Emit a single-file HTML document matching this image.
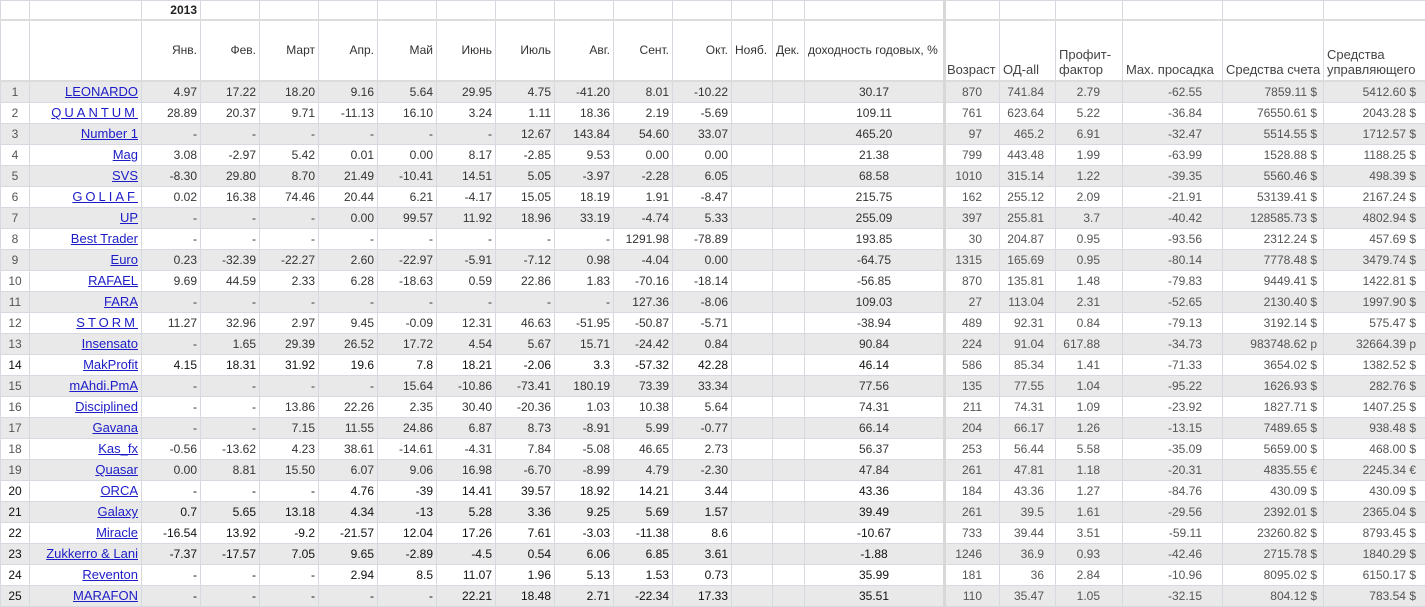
<!DOCTYPE html>
<html><head><meta charset="utf-8"><style>
body{margin:0;background:#fff;width:1425px;height:606px;overflow:hidden}
table{border-collapse:collapse;table-layout:fixed;width:1425px;font-family:"Liberation Sans","DejaVu Sans",sans-serif;font-size:12px;color:#333}
td{border:1px solid #d6d9e0;padding:0 3px;white-space:nowrap;overflow:hidden;text-align:right;height:20px;line-height:20px}
tr.g td{background:#e9e9e9}
tr.h1 td{height:18px;line-height:18px;border-bottom:2px solid #dcdcdc;font-weight:bold;color:#222}
tr.h2 td{height:56px;border-bottom:2px solid #dcdcdc;line-height:15px}
td.hr{font-size:13px;color:#444;vertical-align:bottom;text-align:left;padding-bottom:3px}
td.i{color:#555;text-align:center}
td.nm a{color:#1c1cc8;text-decoration:underline;font-size:13px}
td.y{text-align:center}
td.s{border-left:3px solid #d8d8d8}
td.r{color:#555}
td.a{padding-right:17px}
td.o{padding-right:11px}
td.p{padding-right:22px}
td.d{padding-right:20px}
td.e{padding-right:6px}
td.m{padding-right:9px}
tr.k td{color:#111}
tr.k td.r{color:#555}
.sp{letter-spacing:3px}
</style></head><body>
<table>
<colgroup><col style="width:29px"><col style="width:112px"><col style="width:59px"><col style="width:59px"><col style="width:59px"><col style="width:59px"><col style="width:59px"><col style="width:59px"><col style="width:59px"><col style="width:59px"><col style="width:59px"><col style="width:59px"><col style="width:41px"><col style="width:32px"><col style="width:140px"><col style="width:55px"><col style="width:56px"><col style="width:67px"><col style="width:100px"><col style="width:101px"><col style="width:102px"></colgroup>
<tr class="h1"><td></td><td></td><td>2013</td><td></td><td></td><td></td><td></td><td></td><td></td><td></td><td></td><td></td><td></td><td></td><td></td><td class="s"></td><td></td><td></td><td></td><td></td><td></td></tr>
<tr class="h2"><td></td><td></td><td>Янв.</td><td>Фев.</td><td>Март</td><td>Апр.</td><td>Май</td><td>Июнь</td><td>Июль</td><td>Авг.</td><td>Сент.</td><td>Окт.</td><td style="text-align:left">Нояб.</td><td style="text-align:left">Дек.</td><td style="text-align:left">доходность годовых, %</td>
<td class="s hr" style="padding-left:1px">Возраст</td><td class="hr">ОД-all</td><td class="hr">Профит-<br>фактор</td><td class="hr">Max. просадка</td><td class="hr" style="text-align:right">Средства счета</td><td class="hr">Средства<br>управляющего</td></tr>

<tr class="g"><td class="i">1</td><td class="nm"><a>LEONARDO</a></td><td>4.97</td><td>17.22</td><td>18.20</td><td>9.16</td><td>5.64</td><td>29.95</td><td>4.75</td><td>-41.20</td><td>8.01</td><td>-10.22</td><td></td><td></td><td class="y">30.17</td><td class="s r a">870</td><td class="r o">741.84</td><td class="r p">2.79</td><td class="r d">-62.55</td><td class="r e">7859.11 $</td><td class="r m">5412.60 $</td></tr>
<tr><td class="i">2</td><td class="nm"><a class="sp">QUANTUM</a></td><td>28.89</td><td>20.37</td><td>9.71</td><td>-11.13</td><td>16.10</td><td>3.24</td><td>1.11</td><td>18.36</td><td>2.19</td><td>-5.69</td><td></td><td></td><td class="y">109.11</td><td class="s r a">761</td><td class="r o">623.64</td><td class="r p">5.22</td><td class="r d">-36.84</td><td class="r e">76550.61 $</td><td class="r m">2043.28 $</td></tr>
<tr class="g"><td class="i">3</td><td class="nm"><a>Number 1</a></td><td>-</td><td>-</td><td>-</td><td>-</td><td>-</td><td>-</td><td>12.67</td><td>143.84</td><td>54.60</td><td>33.07</td><td></td><td></td><td class="y">465.20</td><td class="s r a">97</td><td class="r o">465.2</td><td class="r p">6.91</td><td class="r d">-32.47</td><td class="r e">5514.55 $</td><td class="r m">1712.57 $</td></tr>
<tr><td class="i">4</td><td class="nm"><a>Mag</a></td><td>3.08</td><td>-2.97</td><td>5.42</td><td>0.01</td><td>0.00</td><td>8.17</td><td>-2.85</td><td>9.53</td><td>0.00</td><td>0.00</td><td></td><td></td><td class="y">21.38</td><td class="s r a">799</td><td class="r o">443.48</td><td class="r p">1.99</td><td class="r d">-63.99</td><td class="r e">1528.88 $</td><td class="r m">1188.25 $</td></tr>
<tr class="g"><td class="i">5</td><td class="nm"><a>SVS</a></td><td>-8.30</td><td>29.80</td><td>8.70</td><td>21.49</td><td>-10.41</td><td>14.51</td><td>5.05</td><td>-3.97</td><td>-2.28</td><td>6.05</td><td></td><td></td><td class="y">68.58</td><td class="s r a">1010</td><td class="r o">315.14</td><td class="r p">1.22</td><td class="r d">-39.35</td><td class="r e">5560.46 $</td><td class="r m">498.39 $</td></tr>
<tr><td class="i">6</td><td class="nm"><a class="sp">GOLIAF</a></td><td>0.02</td><td>16.38</td><td>74.46</td><td>20.44</td><td>6.21</td><td>-4.17</td><td>15.05</td><td>18.19</td><td>1.91</td><td>-8.47</td><td></td><td></td><td class="y">215.75</td><td class="s r a">162</td><td class="r o">255.12</td><td class="r p">2.09</td><td class="r d">-21.91</td><td class="r e">53139.41 $</td><td class="r m">2167.24 $</td></tr>
<tr class="g"><td class="i">7</td><td class="nm"><a>UP</a></td><td>-</td><td>-</td><td>-</td><td>0.00</td><td>99.57</td><td>11.92</td><td>18.96</td><td>33.19</td><td>-4.74</td><td>5.33</td><td></td><td></td><td class="y">255.09</td><td class="s r a">397</td><td class="r o">255.81</td><td class="r p">3.7</td><td class="r d">-40.42</td><td class="r e">128585.73 $</td><td class="r m">4802.94 $</td></tr>
<tr><td class="i">8</td><td class="nm"><a>Best Trader</a></td><td>-</td><td>-</td><td>-</td><td>-</td><td>-</td><td>-</td><td>-</td><td>-</td><td>1291.98</td><td>-78.89</td><td></td><td></td><td class="y">193.85</td><td class="s r a">30</td><td class="r o">204.87</td><td class="r p">0.95</td><td class="r d">-93.56</td><td class="r e">2312.24 $</td><td class="r m">457.69 $</td></tr>
<tr class="g"><td class="i">9</td><td class="nm"><a>Euro</a></td><td>0.23</td><td>-32.39</td><td>-22.27</td><td>2.60</td><td>-22.97</td><td>-5.91</td><td>-7.12</td><td>0.98</td><td>-4.04</td><td>0.00</td><td></td><td></td><td class="y">-64.75</td><td class="s r a">1315</td><td class="r o">165.69</td><td class="r p">0.95</td><td class="r d">-80.14</td><td class="r e">7778.48 $</td><td class="r m">3479.74 $</td></tr>
<tr><td class="i">10</td><td class="nm"><a>RAFAEL</a></td><td>9.69</td><td>44.59</td><td>2.33</td><td>6.28</td><td>-18.63</td><td>0.59</td><td>22.86</td><td>1.83</td><td>-70.16</td><td>-18.14</td><td></td><td></td><td class="y">-56.85</td><td class="s r a">870</td><td class="r o">135.81</td><td class="r p">1.48</td><td class="r d">-79.83</td><td class="r e">9449.41 $</td><td class="r m">1422.81 $</td></tr>
<tr class="g"><td class="i">11</td><td class="nm"><a>FARA</a></td><td>-</td><td>-</td><td>-</td><td>-</td><td>-</td><td>-</td><td>-</td><td>-</td><td>127.36</td><td>-8.06</td><td></td><td></td><td class="y">109.03</td><td class="s r a">27</td><td class="r o">113.04</td><td class="r p">2.31</td><td class="r d">-52.65</td><td class="r e">2130.40 $</td><td class="r m">1997.90 $</td></tr>
<tr><td class="i">12</td><td class="nm"><a class="sp">STORM</a></td><td>11.27</td><td>32.96</td><td>2.97</td><td>9.45</td><td>-0.09</td><td>12.31</td><td>46.63</td><td>-51.95</td><td>-50.87</td><td>-5.71</td><td></td><td></td><td class="y">-38.94</td><td class="s r a">489</td><td class="r o">92.31</td><td class="r p">0.84</td><td class="r d">-79.13</td><td class="r e">3192.14 $</td><td class="r m">575.47 $</td></tr>
<tr class="g"><td class="i">13</td><td class="nm"><a>Insensato</a></td><td>-</td><td>1.65</td><td>29.39</td><td>26.52</td><td>17.72</td><td>4.54</td><td>5.67</td><td>15.71</td><td>-24.42</td><td>0.84</td><td></td><td></td><td class="y">90.84</td><td class="s r a">224</td><td class="r o">91.04</td><td class="r p">617.88</td><td class="r d">-34.73</td><td class="r e">983748.62 р</td><td class="r m">32664.39 р</td></tr>
<tr class="k"><td class="i">14</td><td class="nm"><a>MakProfit</a></td><td>4.15</td><td>18.31</td><td>31.92</td><td>19.6</td><td>7.8</td><td>18.21</td><td>-2.06</td><td>3.3</td><td>-57.32</td><td>42.28</td><td></td><td></td><td class="y">46.14</td><td class="s r a">586</td><td class="r o">85.34</td><td class="r p">1.41</td><td class="r d">-71.33</td><td class="r e">3654.02 $</td><td class="r m">1382.52 $</td></tr>
<tr class="g"><td class="i">15</td><td class="nm"><a>mAhdi.PmA</a></td><td>-</td><td>-</td><td>-</td><td>-</td><td>15.64</td><td>-10.86</td><td>-73.41</td><td>180.19</td><td>73.39</td><td>33.34</td><td></td><td></td><td class="y">77.56</td><td class="s r a">135</td><td class="r o">77.55</td><td class="r p">1.04</td><td class="r d">-95.22</td><td class="r e">1626.93 $</td><td class="r m">282.76 $</td></tr>
<tr><td class="i">16</td><td class="nm"><a>Disciplined</a></td><td>-</td><td>-</td><td>13.86</td><td>22.26</td><td>2.35</td><td>30.40</td><td>-20.36</td><td>1.03</td><td>10.38</td><td>5.64</td><td></td><td></td><td class="y">74.31</td><td class="s r a">211</td><td class="r o">74.31</td><td class="r p">1.09</td><td class="r d">-23.92</td><td class="r e">1827.71 $</td><td class="r m">1407.25 $</td></tr>
<tr class="g"><td class="i">17</td><td class="nm"><a>Gavana</a></td><td>-</td><td>-</td><td>7.15</td><td>11.55</td><td>24.86</td><td>6.87</td><td>8.73</td><td>-8.91</td><td>5.99</td><td>-0.77</td><td></td><td></td><td class="y">66.14</td><td class="s r a">204</td><td class="r o">66.17</td><td class="r p">1.26</td><td class="r d">-13.15</td><td class="r e">7489.65 $</td><td class="r m">938.48 $</td></tr>
<tr><td class="i">18</td><td class="nm"><a>Kas_fx</a></td><td>-0.56</td><td>-13.62</td><td>4.23</td><td>38.61</td><td>-14.61</td><td>-4.31</td><td>7.84</td><td>-5.08</td><td>46.65</td><td>2.73</td><td></td><td></td><td class="y">56.37</td><td class="s r a">253</td><td class="r o">56.44</td><td class="r p">5.58</td><td class="r d">-35.09</td><td class="r e">5659.00 $</td><td class="r m">468.00 $</td></tr>
<tr class="g"><td class="i">19</td><td class="nm"><a>Quasar</a></td><td>0.00</td><td>8.81</td><td>15.50</td><td>6.07</td><td>9.06</td><td>16.98</td><td>-6.70</td><td>-8.99</td><td>4.79</td><td>-2.30</td><td></td><td></td><td class="y">47.84</td><td class="s r a">261</td><td class="r o">47.81</td><td class="r p">1.18</td><td class="r d">-20.31</td><td class="r e">4835.55 €</td><td class="r m">2245.34 €</td></tr>
<tr class="k"><td class="i">20</td><td class="nm"><a>ORCA</a></td><td>-</td><td>-</td><td>-</td><td>4.76</td><td>-39</td><td>14.41</td><td>39.57</td><td>18.92</td><td>14.21</td><td>3.44</td><td></td><td></td><td class="y">43.36</td><td class="s r a">184</td><td class="r o">43.36</td><td class="r p">1.27</td><td class="r d">-84.76</td><td class="r e">430.09 $</td><td class="r m">430.09 $</td></tr>
<tr class="g k"><td class="i">21</td><td class="nm"><a>Galaxy</a></td><td>0.7</td><td>5.65</td><td>13.18</td><td>4.34</td><td>-13</td><td>5.28</td><td>3.36</td><td>9.25</td><td>5.69</td><td>1.57</td><td></td><td></td><td class="y">39.49</td><td class="s r a">261</td><td class="r o">39.5</td><td class="r p">1.61</td><td class="r d">-29.56</td><td class="r e">2392.01 $</td><td class="r m">2365.04 $</td></tr>
<tr class="k"><td class="i">22</td><td class="nm"><a>Miracle</a></td><td>-16.54</td><td>13.92</td><td>-9.2</td><td>-21.57</td><td>12.04</td><td>17.26</td><td>7.61</td><td>-3.03</td><td>-11.38</td><td>8.6</td><td></td><td></td><td class="y">-10.67</td><td class="s r a">733</td><td class="r o">39.44</td><td class="r p">3.51</td><td class="r d">-59.11</td><td class="r e">23260.82 $</td><td class="r m">8793.45 $</td></tr>
<tr class="g k"><td class="i">23</td><td class="nm"><a>Zukkerro &amp; Lani</a></td><td>-7.37</td><td>-17.57</td><td>7.05</td><td>9.65</td><td>-2.89</td><td>-4.5</td><td>0.54</td><td>6.06</td><td>6.85</td><td>3.61</td><td></td><td></td><td class="y">-1.88</td><td class="s r a">1246</td><td class="r o">36.9</td><td class="r p">0.93</td><td class="r d">-42.46</td><td class="r e">2715.78 $</td><td class="r m">1840.29 $</td></tr>
<tr class="k"><td class="i">24</td><td class="nm"><a>Reventon</a></td><td>-</td><td>-</td><td>-</td><td>2.94</td><td>8.5</td><td>11.07</td><td>1.96</td><td>5.13</td><td>1.53</td><td>0.73</td><td></td><td></td><td class="y">35.99</td><td class="s r a">181</td><td class="r o">36</td><td class="r p">2.84</td><td class="r d">-10.96</td><td class="r e">8095.02 $</td><td class="r m">6150.17 $</td></tr>
<tr class="g k"><td class="i">25</td><td class="nm"><a>MARAFON</a></td><td>-</td><td>-</td><td>-</td><td>-</td><td>-</td><td>22.21</td><td>18.48</td><td>2.71</td><td>-22.34</td><td>17.33</td><td></td><td></td><td class="y">35.51</td><td class="s r a">110</td><td class="r o">35.47</td><td class="r p">1.05</td><td class="r d">-32.15</td><td class="r e">804.12 $</td><td class="r m">783.54 $</td></tr>
</table>
</body></html>
